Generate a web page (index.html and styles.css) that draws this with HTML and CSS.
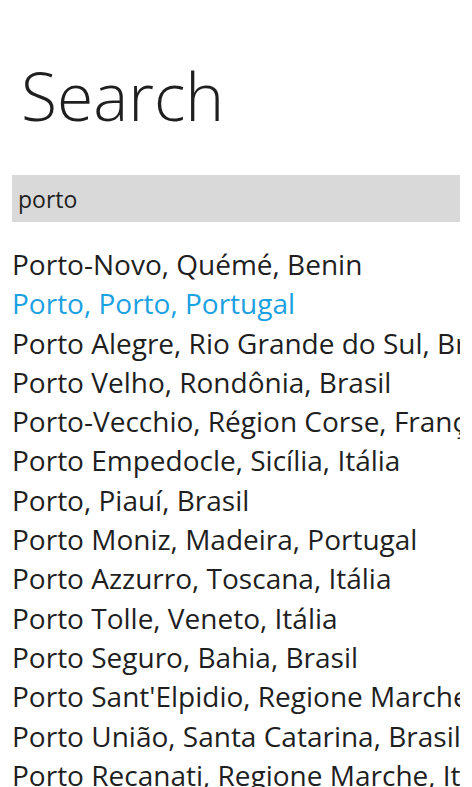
FILE: index.html
```html
<!DOCTYPE html>
<html>
<head>
<meta charset="utf-8">
<link rel="stylesheet" href="styles.css">
</head>
<body>
<div class="page">
  <h1 class="title">Search</h1>
  <div class="searchbox"><span class="query">porto</span></div>
  <ul class="results">
    <li class="item">Porto-Novo, Quémé, Benin</li>
    <li class="item selected">Porto, Porto, Portugal</li>
    <li class="item">Porto Alegre, Rio Grande do Sul, Brasil</li>
    <li class="item">Porto Velho, Rondônia, Brasil</li>
    <li class="item">Porto-Vecchio, Région Corse, França</li>
    <li class="item">Porto Empedocle, Sicília, Itália</li>
    <li class="item">Porto, Piauí, Brasil</li>
    <li class="item">Porto Moniz, Madeira, Portugal</li>
    <li class="item">Porto Azzurro, Toscana, Itália</li>
    <li class="item">Porto Tolle, Veneto, Itália</li>
    <li class="item">Porto Seguro, Bahia, Brasil</li>
    <li class="item">Porto Sant'Elpidio, Regione Marche, Itália</li>
    <li class="item">Porto União, Santa Catarina, Brasil</li>
    <li class="item">Porto Recanati, Regione Marche, Itália</li>
  </ul>
</div>
</body>
</html>
```
FILE: styles.css
```css
html, body {
  margin: 0;
  padding: 0;
  background: #ffffff;
}
body {
  font-family: "Open Sans", "Noto Sans", sans-serif;
  color: #1f1f1f;
  overflow: hidden;
  height: 787px;
}
.page {
  padding: 0 0 0 12px;
}
.title {
  margin: 0;
  padding: 51px 0 0 9px;
  height: 127px;
  box-sizing: border-box;
  font-size: 66px;
  font-weight: 300;
  line-height: 88px;
  color: #1f1f1f;
}
.searchbox {
  width: 448px;
  height: 47px;
  background: #d9d9d9;
  box-sizing: border-box;
  padding: 0 0 0 6px;
  margin-top: 48px;
  display: flex;
  align-items: center;
}
.query {
  font-size: 23px;
  line-height: 30px;
  color: #1f1f1f;
}
.results {
  list-style: none;
  margin: 23px 0 0 0;
  padding: 0;
  width: 448px;
  overflow: hidden;
}
.item {
  white-space: nowrap;
  font-size: 28px;
  line-height: 39.3px;
  height: 39.3px;
  color: #1f1f1f;
}
.item.selected {
  color: #1ba1e2;
}
```
